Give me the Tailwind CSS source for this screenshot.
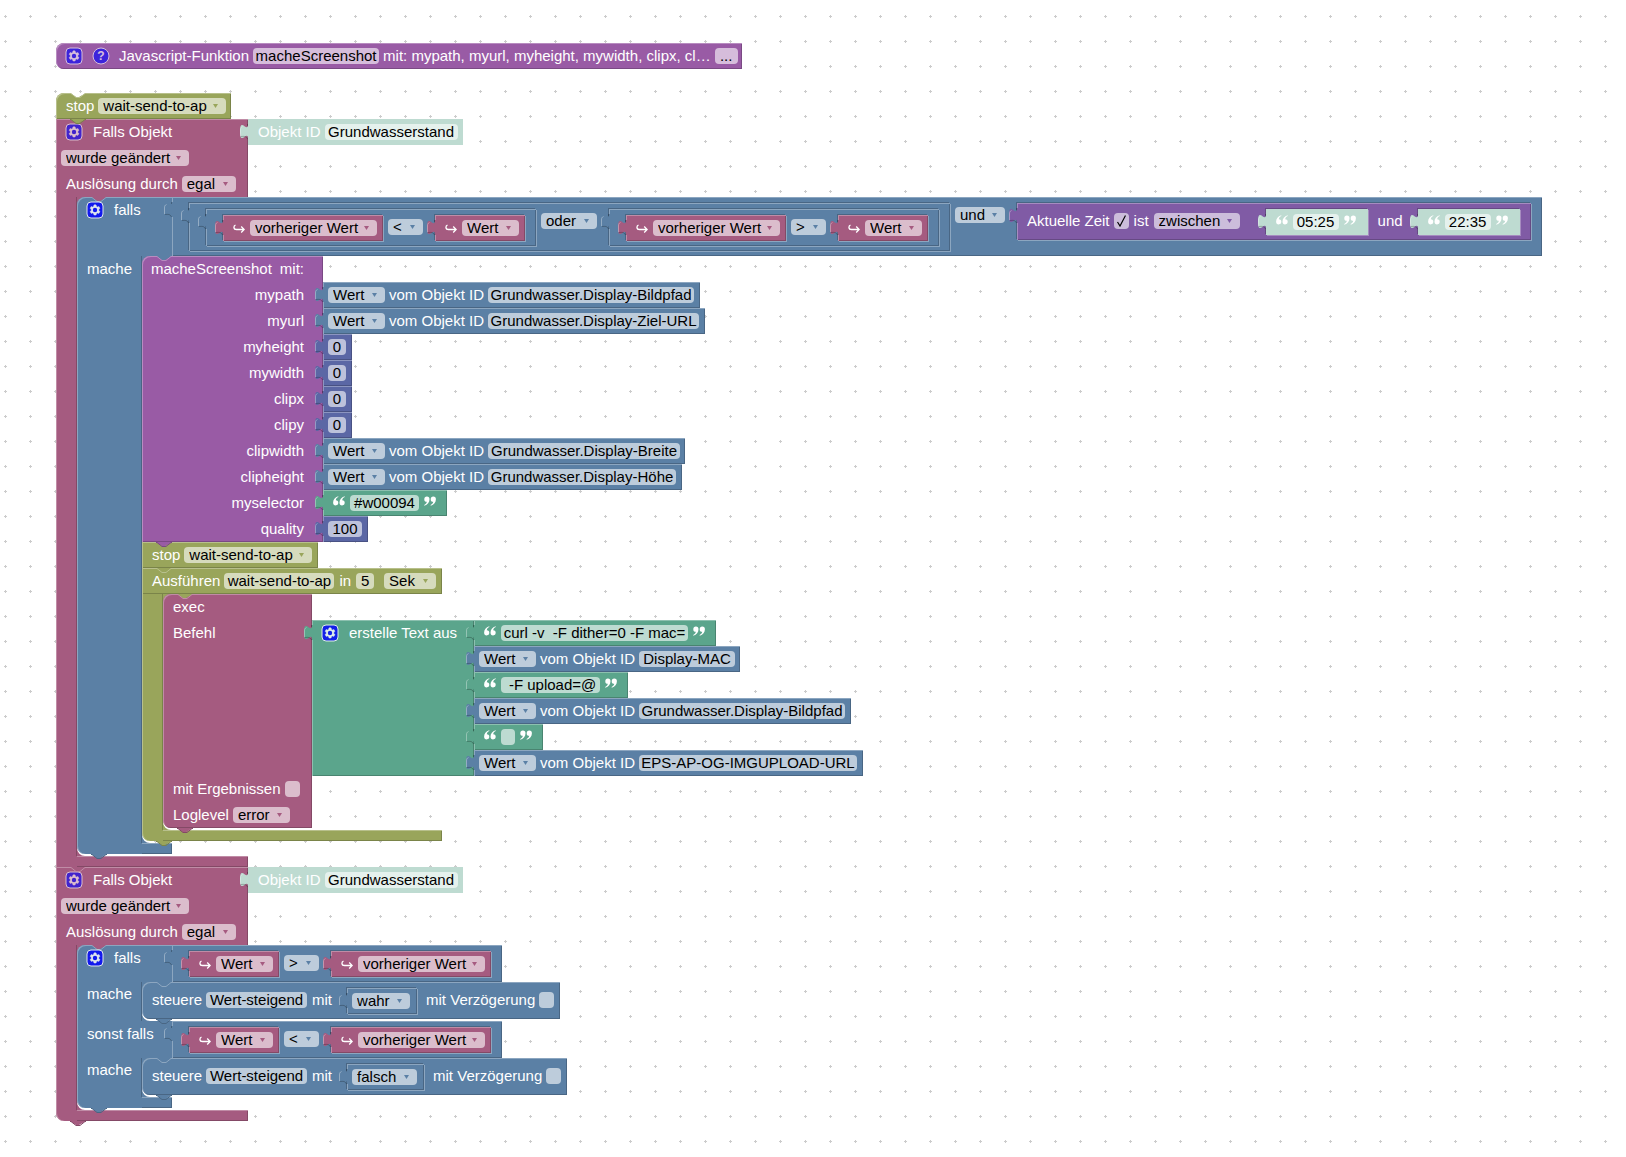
<!DOCTYPE html>
<html lang="de">
<head>
<meta charset="utf-8">
<title>Blockly – Grundwasserstand</title>
<script src="https://cdn.jsdelivr.net/npm/@tailwindcss/browser@4"></script>
</head>
<body class="bg-white">

<!-- Shared shapes -->
<svg class="hidden" aria-hidden="true">
  <symbol id="notch" viewBox="0 0 16 5" overflow="visible"><path stroke="none" d="M0 0l6 4h3l7-4z"/><path fill="none" d="M0 .5h1l5 4h4l5-4h1"/></symbol>
  <symbol id="tab" viewBox="0 0 9 16" overflow="visible">
    <path d="M9 0H8C8 10 0-8 0 7.500S8 5 8 15h1z"/>
    <path d="M.5 12V6c0-2 .6-3 2-3.500" fill="none" stroke="#fff" stroke-opacity=".35"/>
    <path d="M7.500 0v2M1 12.500c2 0 5-1 6.500 2.500" fill="none" stroke="#000" stroke-opacity=".25"/>
  </symbol>
  <symbol id="gear" viewBox="0 0 16 16" overflow="visible">
    <rect width="16" height="16" rx="4" fill="#00f" stroke="#fff"/>
    <path fill="#fff" stroke="#fff" stroke-width=".4" d="m4.203,7.296 0,1.368 -0.92,0.677 -0.11,0.41 0.9,1.59 0.41,0.11 1.05,-0.45 1.18,0.68 0.13,1.13 0.3,0.3 1.81,0 0.3,-0.3 0.13,-1.13 1.18,-0.68 1.05,0.45 0.41,-0.11 0.9,-1.59 -0.11,-0.41 -0.92,-0.677 0,-1.368 0.92,-0.677 0.11,-0.41 -0.9,-1.59 -0.41,-0.11 -1.05,0.45 -1.18,-0.68 -0.13,-1.13 -0.3,-0.3 -1.81,0 -0.3,0.3 -0.13,1.13 -1.18,0.68 -1.05,-0.45 -0.41,0.11 -0.9,1.59 0.11,0.41z"/>
    <circle cx="8" cy="8" r="2.200" fill="#00f"/>
  </symbol>
  <symbol id="tri" viewBox="0 0 5 4"><path d="M0 0h5L2.500 4z"/></symbol>
  <symbol id="hook" viewBox="0 0 12 11"><path fill="none" stroke="#fff" stroke-width="1.300" d="M2.500 2.200C.4 2.800.2 6.500 3.500 6.500H11M8.200 3.500l3 3-3 3"/></symbol>
  <symbol id="quote" viewBox="0 0 12 10"><path fill="#fff" d="M5.200.2C2 1.200.1 3.600.1 6.800a2.600 2.600 0 1 0 2.700-2.600C2.900 2.800 3.800 1.700 5.400 1zM11.600.2C8.400 1.200 6.500 3.600 6.500 6.800a2.600 2.600 0 1 0 2.700-2.600C9.300 2.800 10.200 1.700 11.800 1z"/></symbol>
</svg>

<main class="relative min-h-screen overflow-hidden pt-[43px] pb-8 pl-14 text-[15px] leading-4 whitespace-nowrap text-white [font-family:'Liberation_Sans',Arial,sans-serif]">
  <svg class="absolute inset-0 h-full w-full" aria-hidden="true">
    <defs><pattern id="grid" width="25" height="25" patternUnits="userSpaceOnUse"><path d="M4 16.500h3M5.500 15v3" stroke="#ccc"/></pattern></defs>
    <rect width="100%" height="100%" fill="url(#grid)"/>
  </svg>

  <!-- Function definition (collapsed) -->
  <section class="relative flex h-[26px] w-max items-center rounded-l-lg bg-[#995ba5] pr-1 pl-2.5 shadow-[inset_1px_1px_0_#b88cc0,inset_-1px_-1px_0_#7a4984]">
    <button class="size-4 opacity-60" aria-label="Einstellungen"><svg class="size-4 overflow-visible"><use href="#gear"/></svg></button>
    <button class="ml-[11px] size-4 opacity-60" aria-label="Hilfe"><svg class="size-4 overflow-visible" viewBox="0 0 16 16"><circle cx="8" cy="8" r="8" fill="#00f" stroke="#fff"/><text x="8" y="12" text-anchor="middle" font-size="12" font-weight="bold" fill="#fff">?</text></svg></button>
    <span class="ml-2.5">Javascript-Funktion</span>
    <input aria-label="Funktionsname" class="ml-1 h-4 w-[126px] rounded bg-white/60 text-center text-black" value="macheScreenshot">
    <span class="ml-1">mit: mypath, myurl, myheight, mywidth, clipx, cl…</span>
    <button class="ml-1 h-4 w-[23px] rounded bg-white/60 text-black">...</button>
  </section>

  <div class="relative mt-6 w-max">
    <!-- stop -->
    <section class="relative flex h-[26px] w-[175px] items-center rounded-tl-lg bg-[#99a55b] pl-2.5 shadow-[inset_1px_1px_0_#b8c08c,inset_-1px_-1px_0_#7a8449]">
      <svg class="absolute top-0 left-3.5 h-[5px] w-4 fill-white stroke-[#b8c08c]"><use href="#notch"/></svg>
      <span>stop</span>
      <span class="relative ml-1 flex"><select aria-label="Timer" class="h-4 w-32 appearance-none rounded bg-white/60 pl-[5px] text-black"><option>wait-send-to-ap</option></select><svg class="pointer-events-none absolute top-1.5 right-2 h-1 w-[5px] fill-[#99a55b]"><use href="#tri"/></svg></span>
      <svg class="absolute top-full left-3.5 z-10 h-[5px] w-4 fill-[#99a55b] stroke-[#7a8449]"><use href="#notch"/></svg>
    </section>

    <!-- Trigger 1 -->
    <section>
      <div class="flex">
        <div class="h-[78px] w-48 bg-[#a55b80] shadow-[inset_1px_1px_0_#c08ca6,inset_-1px_0_0_#844966]">
          <div class="flex h-[26px] items-center pl-2.5">
            <button class="size-4 opacity-60" aria-label="Einstellungen"><svg class="size-4 overflow-visible"><use href="#gear"/></svg></button>
            <span class="ml-[11px]">Falls Objekt</span>
          </div>
          <div class="flex h-[26px] items-center pl-[5px]">
            <span class="relative flex"><select aria-label="Bedingung" class="h-4 w-32 appearance-none rounded bg-white/60 pl-[5px] text-black"><option>wurde geändert</option></select><svg class="pointer-events-none absolute top-1.5 right-2 h-1 w-[5px] fill-[#a55b80]"><use href="#tri"/></svg></span>
          </div>
          <div class="flex h-[26px] items-center pl-2.5">
            <span>Auslösung durch</span>
            <span class="relative ml-1 flex"><select aria-label="Auslösung durch" class="h-4 w-[54px] appearance-none rounded bg-white/60 pl-[5px] text-black"><option>egal</option></select><svg class="pointer-events-none absolute top-1.5 right-2 h-1 w-[5px] fill-[#a55b80]"><use href="#tri"/></svg></span>
          </div>
        </div>
        <div class="relative flex h-[26px] items-center bg-[#bedbd1] pr-[5px] pl-2.5">
          <svg class="absolute top-[5px] -left-2 h-4 w-[9px] fill-[#bedbd1]"><use href="#tab"/></svg>
          <span>Objekt ID</span>
          <input aria-label="Objekt ID" class="ml-1 h-4 w-[133px] rounded bg-white/60 text-center text-black" value="Grundwasserstand">
        </div>
      </div>

      <div class="flex">
        <div class="relative w-[21px] bg-[#a55b80] shadow-[inset_1px_0_0_#c08ca6]"><div class="absolute top-0 right-0 bottom-[11px] w-px bg-[#844966]"></div></div>
        <div class="relative">
          <div class="absolute top-0 left-0 size-2 bg-[#a55b80]"></div>

          <!-- falls / mache -->
          <section class="relative">
            <div class="flex">
              <div class="relative flex w-[95px] items-start rounded-tl-lg bg-[#5b80a5] pt-[5px] pl-2.5 shadow-[inset_1px_1px_0_#8ca6c0]">
                <svg class="absolute top-0 left-3.5 h-[5px] w-4 fill-[#a55b80] stroke-[#8ca6c0]"><use href="#notch"/></svg>
                <button class="size-4 opacity-80" aria-label="Einstellungen"><svg class="size-4 overflow-visible"><use href="#gear"/></svg></button>
                <span class="ml-[11px]">falls</span>
              </div>
              <!-- und -->
              <div class="relative flex items-start bg-[#5b80a5] pt-1.5 pr-[11px] pb-[5px] pl-[17px] shadow-[inset_1px_1px_0_#8ca6c0,inset_-1px_-1px_0_#496684]">
                <svg class="absolute top-[5px] -left-2 h-4 w-[9px] fill-[#5b80a5]"><use href="#tab"/></svg>
                <!-- oder -->
                <div class="relative flex items-start bg-[#5b80a5] pt-1.5 pr-[11px] pb-[5px] pl-[17px] shadow-[inset_1px_1px_0_#8ca6c0,inset_-1px_-1px_0_#496684,1px_1px_0_#8ca6c0,-1px_-1px_0_#496684]">
                  <svg class="absolute top-[5px] -left-2 h-4 w-[9px] fill-[#5b80a5]"><use href="#tab"/></svg>
                  <div class="relative flex items-start bg-[#5b80a5] pt-1.5 pr-[11px] pb-[5px] pl-[17px] shadow-[inset_1px_1px_0_#8ca6c0,inset_-1px_-1px_0_#496684,1px_1px_0_#8ca6c0,-1px_-1px_0_#496684]">
                    <svg class="absolute top-[5px] -left-2 h-4 w-[9px] fill-[#5b80a5]"><use href="#tab"/></svg>
                    <div class="relative flex h-[26px] items-center bg-[#a55b80] pr-1.5 pl-2.5 shadow-[inset_1px_1px_0_#c08ca6,inset_-1px_-1px_0_#844966,1px_1px_0_#8ca6c0,-1px_-1px_0_#496684]">
                      <svg class="absolute top-[5px] -left-2 h-4 w-[9px] fill-[#a55b80]"><use href="#tab"/></svg>
                      <svg class="h-[11px] w-3"><use href="#hook"/></svg>
                      <span class="relative ml-[5px] flex"><select aria-label="Attribut" class="h-4 w-[127px] appearance-none rounded bg-white/60 pl-[5px] text-black"><option>vorheriger Wert</option></select><svg class="pointer-events-none absolute top-1.5 right-2 h-1 w-[5px] fill-[#a55b80]"><use href="#tri"/></svg></span>
                    </div>
                    <span class="relative mt-1 ml-[5px] flex"><select aria-label="Vergleich" class="h-4 w-[35px] appearance-none rounded bg-white/60 pl-[5px] text-black"><option>&lt;</option></select><svg class="pointer-events-none absolute top-1.5 right-2 h-1 w-[5px] fill-[#5b80a5]"><use href="#tri"/></svg></span>
                    <div class="relative ml-3 flex h-[26px] items-center bg-[#a55b80] pr-1.5 pl-2.5 shadow-[inset_1px_1px_0_#c08ca6,inset_-1px_-1px_0_#844966,1px_1px_0_#8ca6c0,-1px_-1px_0_#496684]">
                      <svg class="absolute top-[5px] -left-2 h-4 w-[9px] fill-[#a55b80]"><use href="#tab"/></svg>
                      <svg class="h-[11px] w-3"><use href="#hook"/></svg>
                      <span class="relative ml-[5px] flex"><select aria-label="Attribut" class="h-4 w-[57px] appearance-none rounded bg-white/60 pl-[5px] text-black"><option>Wert</option></select><svg class="pointer-events-none absolute top-1.5 right-2 h-1 w-[5px] fill-[#a55b80]"><use href="#tri"/></svg></span>
                    </div>
                  </div>
                  <span class="relative mt-1 ml-[5px] flex"><select aria-label="Verknüpfung" class="h-4 w-14 appearance-none rounded bg-white/60 pl-[5px] text-black"><option>oder</option></select><svg class="pointer-events-none absolute top-1.5 right-2 h-1 w-[5px] fill-[#5b80a5]"><use href="#tri"/></svg></span>
                  <div class="relative ml-3 flex items-start bg-[#5b80a5] pt-1.5 pr-[11px] pb-[5px] pl-[17px] shadow-[inset_1px_1px_0_#8ca6c0,inset_-1px_-1px_0_#496684,1px_1px_0_#8ca6c0,-1px_-1px_0_#496684]">
                    <svg class="absolute top-[5px] -left-2 h-4 w-[9px] fill-[#5b80a5]"><use href="#tab"/></svg>
                    <div class="relative flex h-[26px] items-center bg-[#a55b80] pr-1.5 pl-2.5 shadow-[inset_1px_1px_0_#c08ca6,inset_-1px_-1px_0_#844966,1px_1px_0_#8ca6c0,-1px_-1px_0_#496684]">
                      <svg class="absolute top-[5px] -left-2 h-4 w-[9px] fill-[#a55b80]"><use href="#tab"/></svg>
                      <svg class="h-[11px] w-3"><use href="#hook"/></svg>
                      <span class="relative ml-[5px] flex"><select aria-label="Attribut" class="h-4 w-[127px] appearance-none rounded bg-white/60 pl-[5px] text-black"><option>vorheriger Wert</option></select><svg class="pointer-events-none absolute top-1.5 right-2 h-1 w-[5px] fill-[#a55b80]"><use href="#tri"/></svg></span>
                    </div>
                    <span class="relative mt-1 ml-[5px] flex"><select aria-label="Vergleich" class="h-4 w-[35px] appearance-none rounded bg-white/60 pl-[5px] text-black"><option>&gt;</option></select><svg class="pointer-events-none absolute top-1.5 right-2 h-1 w-[5px] fill-[#5b80a5]"><use href="#tri"/></svg></span>
                    <div class="relative ml-3 flex h-[26px] items-center bg-[#a55b80] pr-1.5 pl-2.5 shadow-[inset_1px_1px_0_#c08ca6,inset_-1px_-1px_0_#844966,1px_1px_0_#8ca6c0,-1px_-1px_0_#496684]">
                      <svg class="absolute top-[5px] -left-2 h-4 w-[9px] fill-[#a55b80]"><use href="#tab"/></svg>
                      <svg class="h-[11px] w-3"><use href="#hook"/></svg>
                      <span class="relative ml-[5px] flex"><select aria-label="Attribut" class="h-4 w-[57px] appearance-none rounded bg-white/60 pl-[5px] text-black"><option>Wert</option></select><svg class="pointer-events-none absolute top-1.5 right-2 h-1 w-[5px] fill-[#a55b80]"><use href="#tri"/></svg></span>
                    </div>
                  </div>
                </div>
                <span class="relative mt-1 ml-[5px] flex"><select aria-label="Verknüpfung" class="h-4 w-[50px] appearance-none rounded bg-white/60 pl-[5px] text-black"><option>und</option></select><svg class="pointer-events-none absolute top-1.5 right-2 h-1 w-[5px] fill-[#5b80a5]"><use href="#tri"/></svg></span>
                <!-- Zeitvergleich -->
                <div class="relative ml-3 flex items-start bg-[#805ba5] pt-1.5 pr-[11px] pb-[5px] pl-2.5 shadow-[inset_1px_1px_0_#a68cc0,inset_-1px_-1px_0_#664984,1px_1px_0_#8ca6c0,-1px_-1px_0_#496684]">
                  <svg class="absolute top-[5px] -left-2 h-4 w-[9px] fill-[#805ba5]"><use href="#tab"/></svg>
                  <label class="mt-1 flex gap-1">Aktuelle Zeit
                    <span class="relative flex"><input type="checkbox" checked class="h-4 w-[15px] appearance-none rounded bg-white/60"><svg class="pointer-events-none absolute top-0.5 left-[3px] h-3 w-[9px]" viewBox="0 0 9 12"><path d="M.5 7L3 11 8.500.5" fill="none" stroke="#000" stroke-width="1.200"/></svg></span>
                  </label>
                  <span class="mt-1 ml-[5px]">ist</span>
                  <span class="relative mt-1 ml-[5px] flex"><select aria-label="Zeitraum" class="h-4 w-[86px] appearance-none rounded bg-white/60 pl-[5px] text-black"><option>zwischen</option></select><svg class="pointer-events-none absolute top-1.5 right-2 h-1 w-[5px] fill-[#805ba5]"><use href="#tri"/></svg></span>
                  <div class="relative ml-[26px] flex h-[26px] items-center bg-[#bedbd1] pr-3 pl-2.5 shadow-[1px_1px_0_#a68cc0,-1px_-1px_0_#664984]">
                    <svg class="absolute top-[5px] -left-2 h-4 w-[9px] fill-[#bedbd1]"><use href="#tab"/></svg>
                    <svg class="mb-1 h-2.5 w-3"><use href="#quote"/></svg>
                    <input aria-label="Von" class="mx-[5px] h-4 w-[46px] rounded bg-white/60 text-center text-black" value="05:25">
                    <svg class="mb-1 h-2.5 w-3 rotate-180"><use href="#quote"/></svg>
                  </div>
                  <span class="mt-1 ml-2.5">und</span>
                  <div class="relative ml-[15px] flex h-[26px] items-center bg-[#bedbd1] pr-3 pl-2.5 shadow-[1px_1px_0_#a68cc0,-1px_-1px_0_#664984]">
                    <svg class="absolute top-[5px] -left-2 h-4 w-[9px] fill-[#bedbd1]"><use href="#tab"/></svg>
                    <svg class="mb-1 h-2.5 w-3"><use href="#quote"/></svg>
                    <input aria-label="Bis" class="mx-[5px] h-4 w-[46px] rounded bg-white/60 text-center text-black" value="22:35">
                    <svg class="mb-1 h-2.5 w-3 rotate-180"><use href="#quote"/></svg>
                  </div>
                </div>
              </div>
            </div>

            <div class="flex">
              <div class="relative w-[65px] rounded-bl-lg bg-[#5b80a5] pt-[5px] pl-2.5 shadow-[inset_1px_0_0_#8ca6c0]">mache
                <div class="absolute top-0 right-0 bottom-[11px] w-px bg-[#496684]"></div>
                <svg class="absolute top-full left-3.5 z-10 h-[5px] w-4 fill-[#5b80a5] stroke-[#496684]"><use href="#notch"/></svg>
              </div>
              <div class="relative">
                <div class="absolute top-0 left-0 size-2 bg-[#5b80a5]"></div>

                <!-- macheScreenshot call -->
                <section class="relative flex">
                  <div class="relative w-[181px] rounded-tl-lg bg-[#995ba5] pr-[19px] text-right leading-[26px] shadow-[inset_1px_1px_0_#b88cc0,inset_-1px_-1px_0_#7a4984]">
                    <svg class="absolute top-0 left-3.5 h-[5px] w-4 fill-[#5b80a5] stroke-[#b88cc0]"><use href="#notch"/></svg>
                    <div class="flex justify-end gap-2"><span>macheScreenshot</span><span>mit:</span></div>
                    <div>mypath</div>
                    <div>myurl</div>
                    <div>myheight</div>
                    <div>mywidth</div>
                    <div>clipx</div>
                    <div>clipy</div>
                    <div>clipwidth</div>
                    <div>clipheight</div>
                    <div>myselector</div>
                    <div>quality</div>
                    <svg class="absolute top-full left-3.5 z-10 h-[5px] w-4 fill-[#995ba5] stroke-[#7a4984]"><use href="#notch"/></svg>
                  </div>
                  <div class="flex flex-col items-start pt-[26px]">
                    <div class="relative flex h-[26px] items-center bg-[#5b80a5] pr-1.5 pl-[5px] shadow-[inset_1px_1px_0_#8ca6c0,inset_-1px_-1px_0_#496684]">
                      <svg class="absolute top-[5px] -left-2 h-4 w-[9px] fill-[#5b80a5]"><use href="#tab"/></svg>
                      <span class="relative flex"><select aria-label="Attribut" class="h-4 w-[57px] appearance-none rounded bg-white/60 pl-[5px] text-black"><option>Wert</option></select><svg class="pointer-events-none absolute top-1.5 right-2 h-1 w-[5px] fill-[#5b80a5]"><use href="#tri"/></svg></span>
                      <span class="ml-1">vom Objekt ID</span>
                      <input aria-label="Objekt ID" class="ml-1 h-4 w-[206px] rounded bg-white/60 text-center text-black" value="Grundwasser.Display-Bildpfad">
                    </div>
                    <div class="relative flex h-[26px] items-center bg-[#5b80a5] pr-1.5 pl-[5px] shadow-[inset_1px_1px_0_#8ca6c0,inset_-1px_-1px_0_#496684]">
                      <svg class="absolute top-[5px] -left-2 h-4 w-[9px] fill-[#5b80a5]"><use href="#tab"/></svg>
                      <span class="relative flex"><select aria-label="Attribut" class="h-4 w-[57px] appearance-none rounded bg-white/60 pl-[5px] text-black"><option>Wert</option></select><svg class="pointer-events-none absolute top-1.5 right-2 h-1 w-[5px] fill-[#5b80a5]"><use href="#tri"/></svg></span>
                      <span class="ml-1">vom Objekt ID</span>
                      <input aria-label="Objekt ID" class="ml-1 h-4 w-[211px] rounded bg-white/60 text-center text-black" value="Grundwasser.Display-Ziel-URL">
                    </div>
                    <div class="relative flex h-[26px] items-center bg-[#5b67a5] pr-1.5 pl-[5px] shadow-[inset_1px_1px_0_#8c95c0,inset_-1px_-1px_0_#495284]">
                      <svg class="absolute top-[5px] -left-2 h-4 w-[9px] fill-[#5b67a5]"><use href="#tab"/></svg>
                      <input aria-label="myheight" class="h-4 w-[18px] rounded bg-white/60 text-center text-black" value="0">
                    </div>
                    <div class="relative flex h-[26px] items-center bg-[#5b67a5] pr-1.5 pl-[5px] shadow-[inset_1px_1px_0_#8c95c0,inset_-1px_-1px_0_#495284]">
                      <svg class="absolute top-[5px] -left-2 h-4 w-[9px] fill-[#5b67a5]"><use href="#tab"/></svg>
                      <input aria-label="mywidth" class="h-4 w-[18px] rounded bg-white/60 text-center text-black" value="0">
                    </div>
                    <div class="relative flex h-[26px] items-center bg-[#5b67a5] pr-1.5 pl-[5px] shadow-[inset_1px_1px_0_#8c95c0,inset_-1px_-1px_0_#495284]">
                      <svg class="absolute top-[5px] -left-2 h-4 w-[9px] fill-[#5b67a5]"><use href="#tab"/></svg>
                      <input aria-label="clipx" class="h-4 w-[18px] rounded bg-white/60 text-center text-black" value="0">
                    </div>
                    <div class="relative flex h-[26px] items-center bg-[#5b67a5] pr-1.5 pl-[5px] shadow-[inset_1px_1px_0_#8c95c0,inset_-1px_-1px_0_#495284]">
                      <svg class="absolute top-[5px] -left-2 h-4 w-[9px] fill-[#5b67a5]"><use href="#tab"/></svg>
                      <input aria-label="clipy" class="h-4 w-[18px] rounded bg-white/60 text-center text-black" value="0">
                    </div>
                    <div class="relative flex h-[26px] items-center bg-[#5b80a5] pr-[5px] pl-[5px] shadow-[inset_1px_1px_0_#8ca6c0,inset_-1px_-1px_0_#496684]">
                      <svg class="absolute top-[5px] -left-2 h-4 w-[9px] fill-[#5b80a5]"><use href="#tab"/></svg>
                      <span class="relative flex"><select aria-label="Attribut" class="h-4 w-[57px] appearance-none rounded bg-white/60 pl-[5px] text-black"><option>Wert</option></select><svg class="pointer-events-none absolute top-1.5 right-2 h-1 w-[5px] fill-[#5b80a5]"><use href="#tri"/></svg></span>
                      <span class="ml-1">vom Objekt ID</span>
                      <input aria-label="Objekt ID" class="ml-1 h-4 w-48 rounded bg-white/60 text-center text-black" value="Grundwasser.Display-Breite">
                    </div>
                    <div class="relative flex h-[26px] items-center bg-[#5b80a5] pr-1.5 pl-[5px] shadow-[inset_1px_1px_0_#8ca6c0,inset_-1px_-1px_0_#496684]">
                      <svg class="absolute top-[5px] -left-2 h-4 w-[9px] fill-[#5b80a5]"><use href="#tab"/></svg>
                      <span class="relative flex"><select aria-label="Attribut" class="h-4 w-[57px] appearance-none rounded bg-white/60 pl-[5px] text-black"><option>Wert</option></select><svg class="pointer-events-none absolute top-1.5 right-2 h-1 w-[5px] fill-[#5b80a5]"><use href="#tri"/></svg></span>
                      <span class="ml-1">vom Objekt ID</span>
                      <input aria-label="Objekt ID" class="ml-1 h-4 w-[188px] rounded bg-white/60 text-center text-black" value="Grundwasser.Display-Höhe">
                    </div>
                    <div class="relative flex h-[26px] items-center bg-[#5ba58c] pr-[11px] pl-2.5 shadow-[inset_1px_1px_0_#8cc0af,inset_-1px_-1px_0_#498470]">
                      <svg class="absolute top-[5px] -left-2 h-4 w-[9px] fill-[#5ba58c]"><use href="#tab"/></svg>
                      <svg class="mb-1 h-2.5 w-3"><use href="#quote"/></svg>
                      <input aria-label="myselector" class="mx-[5px] h-4 w-[69px] rounded bg-white/60 text-center text-black" value="#w00094">
                      <svg class="mb-1 h-2.5 w-3 rotate-180"><use href="#quote"/></svg>
                    </div>
                    <div class="relative flex h-[26px] items-center bg-[#5b67a5] pr-1.5 pl-[5px] shadow-[inset_1px_1px_0_#8c95c0,inset_-1px_-1px_0_#495284]">
                      <svg class="absolute top-[5px] -left-2 h-4 w-[9px] fill-[#5b67a5]"><use href="#tab"/></svg>
                      <input aria-label="quality" class="h-4 w-[34px] rounded bg-white/60 text-center text-black" value="100">
                    </div>
                  </div>
                </section>

                <!-- stop -->
                <section class="relative flex h-[26px] w-44 items-center bg-[#99a55b] pl-2.5 shadow-[inset_1px_1px_0_#b8c08c,inset_-1px_-1px_0_#7a8449]">
                  <span>stop</span>
                  <span class="relative ml-1 flex"><select aria-label="Timer" class="h-4 w-32 appearance-none rounded bg-white/60 pl-[5px] text-black"><option>wait-send-to-ap</option></select><svg class="pointer-events-none absolute top-1.5 right-2 h-1 w-[5px] fill-[#99a55b]"><use href="#tri"/></svg></span>
                  <svg class="absolute top-full left-3.5 z-10 h-[5px] w-4 fill-[#99a55b] stroke-[#b8c08c]"><use href="#notch"/></svg>
                </section>

                <!-- Ausführen -->
                <section>
                  <div class="flex h-[26px] w-[300px] items-center bg-[#99a55b] pl-2.5 shadow-[inset_1px_1px_0_#b8c08c,inset_-1px_-1px_0_#7a8449]">
                    <span>Ausführen</span>
                    <input aria-label="Timer-Name" class="ml-1 h-4 w-[110px] rounded bg-white/60 text-center text-black" value="wait-send-to-ap">
                    <span class="ml-[5px]">in</span>
                    <input aria-label="Dauer" class="ml-[5px] h-4 w-[18px] rounded bg-white/60 text-center text-black" value="5">
                    <span class="relative ml-2.5 flex"><select aria-label="Einheit" class="h-4 w-[52px] appearance-none rounded bg-white/60 pl-[5px] text-black"><option>Sek</option></select><svg class="pointer-events-none absolute top-1.5 right-2 h-1 w-[5px] fill-[#99a55b]"><use href="#tri"/></svg></span>
                  </div>
                  <div class="flex">
                    <div class="relative w-[21px] rounded-bl-lg bg-[#99a55b] shadow-[inset_1px_0_0_#b8c08c]">
                      <div class="absolute top-0 right-0 bottom-[11px] w-px bg-[#7a8449]"></div>
                      <svg class="absolute top-full left-3.5 z-10 h-[5px] w-4 fill-[#99a55b] stroke-[#7a8449]"><use href="#notch"/></svg>
                    </div>
                    <div class="relative">
                      <div class="absolute top-0 left-0 size-2 bg-[#99a55b]"></div>

                      <!-- exec -->
                      <section class="relative flex">
                        <div class="relative w-[149px] rounded-l-lg bg-[#a55b80] pl-2.5 shadow-[inset_1px_1px_0_#c08ca6,inset_-1px_-1px_0_#844966]">
                          <svg class="absolute top-0 left-3.5 h-[5px] w-4 fill-[#99a55b] stroke-[#c08ca6]"><use href="#notch"/></svg>
                          <div class="h-[26px] leading-[26px]">exec</div>
                          <div class="h-[156px] leading-[26px]">Befehl</div>
                          <label class="flex h-[26px] items-center gap-1">mit Ergebnissen <input type="checkbox" class="h-4 w-[15px] appearance-none rounded bg-white/60"></label>
                          <div class="flex h-[26px] items-center">
                            <span>Loglevel</span>
                            <span class="relative ml-1 flex"><select aria-label="Loglevel" class="h-4 w-[57px] appearance-none rounded bg-white/60 pl-[5px] text-black"><option>error</option></select><svg class="pointer-events-none absolute top-1.5 right-2 h-1 w-[5px] fill-[#a55b80]"><use href="#tri"/></svg></span>
                          </div>
                          <svg class="absolute top-full left-3.5 z-10 h-[5px] w-4 fill-[#a55b80] stroke-[#844966]"><use href="#notch"/></svg>
                        </div>
                        <div class="flex h-[182px] pt-[26px]">
                          <!-- erstelle Text aus -->
                          <div class="relative flex w-[162px] items-start bg-[#5ba58c] pt-[5px] pl-2.5 shadow-[inset_1px_1px_0_#8cc0af,inset_-1px_-1px_0_#498470]">
                            <svg class="absolute top-[5px] -left-2 h-4 w-[9px] fill-[#5ba58c]"><use href="#tab"/></svg>
                            <button class="size-4 opacity-80" aria-label="Einstellungen"><svg class="size-4 overflow-visible"><use href="#gear"/></svg></button>
                            <span class="ml-[11px]">erstelle Text aus</span>
                          </div>
                          <div class="flex flex-col items-start">
                            <div class="relative flex h-[26px] items-center bg-[#5ba58c] pr-[11px] pl-2.5 shadow-[inset_1px_1px_0_#8cc0af,inset_-1px_-1px_0_#498470]">
                              <svg class="absolute top-[5px] -left-2 h-4 w-[9px] fill-[#5ba58c]"><use href="#tab"/></svg>
                              <svg class="mb-1 h-2.5 w-3"><use href="#quote"/></svg>
                              <input aria-label="Text" class="mx-[5px] h-4 w-[187px] rounded bg-white/60 text-center text-black" value="curl -v  -F dither=0 -F mac=">
                              <svg class="mb-1 h-2.5 w-3 rotate-180"><use href="#quote"/></svg>
                            </div>
                            <div class="relative flex h-[26px] items-center bg-[#5b80a5] pr-[5px] pl-[5px] shadow-[inset_1px_1px_0_#8ca6c0,inset_-1px_-1px_0_#496684]">
                              <svg class="absolute top-[5px] -left-2 h-4 w-[9px] fill-[#5b80a5]"><use href="#tab"/></svg>
                              <span class="relative flex"><select aria-label="Attribut" class="h-4 w-[57px] appearance-none rounded bg-white/60 pl-[5px] text-black"><option>Wert</option></select><svg class="pointer-events-none absolute top-1.5 right-2 h-1 w-[5px] fill-[#5b80a5]"><use href="#tri"/></svg></span>
                              <span class="ml-1">vom Objekt ID</span>
                              <input aria-label="Objekt ID" class="ml-1 h-4 w-24 rounded bg-white/60 text-center text-black" value="Display-MAC">
                            </div>
                            <div class="relative flex h-[26px] items-center bg-[#5ba58c] pr-[11px] pl-2.5 shadow-[inset_1px_1px_0_#8cc0af,inset_-1px_-1px_0_#498470]">
                              <svg class="absolute top-[5px] -left-2 h-4 w-[9px] fill-[#5ba58c]"><use href="#tab"/></svg>
                              <svg class="mb-1 h-2.5 w-3"><use href="#quote"/></svg>
                              <input aria-label="Text" class="mx-[5px] h-4 w-[99px] rounded bg-white/60 text-center text-black" value=" -F upload=@">
                              <svg class="mb-1 h-2.5 w-3 rotate-180"><use href="#quote"/></svg>
                            </div>
                            <div class="relative flex h-[26px] items-center bg-[#5b80a5] pr-1.5 pl-[5px] shadow-[inset_1px_1px_0_#8ca6c0,inset_-1px_-1px_0_#496684]">
                              <svg class="absolute top-[5px] -left-2 h-4 w-[9px] fill-[#5b80a5]"><use href="#tab"/></svg>
                              <span class="relative flex"><select aria-label="Attribut" class="h-4 w-[57px] appearance-none rounded bg-white/60 pl-[5px] text-black"><option>Wert</option></select><svg class="pointer-events-none absolute top-1.5 right-2 h-1 w-[5px] fill-[#5b80a5]"><use href="#tri"/></svg></span>
                              <span class="ml-1">vom Objekt ID</span>
                              <input aria-label="Objekt ID" class="ml-1 h-4 w-[206px] rounded bg-white/60 text-center text-black" value="Grundwasser.Display-Bildpfad">
                            </div>
                            <div class="relative flex h-[26px] items-center bg-[#5ba58c] pr-[11px] pl-2.5 shadow-[inset_1px_1px_0_#8cc0af,inset_-1px_-1px_0_#498470]">
                              <svg class="absolute top-[5px] -left-2 h-4 w-[9px] fill-[#5ba58c]"><use href="#tab"/></svg>
                              <svg class="mb-1 h-2.5 w-3"><use href="#quote"/></svg>
                              <input aria-label="Text" class="mx-[5px] h-4 w-3.5 rounded bg-white/60 text-center text-black" value=" ">
                              <svg class="mb-1 h-2.5 w-3 rotate-180"><use href="#quote"/></svg>
                            </div>
                            <div class="relative flex h-[26px] items-center bg-[#5b80a5] pr-1.5 pl-[5px] shadow-[inset_1px_1px_0_#8ca6c0,inset_-1px_-1px_0_#496684]">
                              <svg class="absolute top-[5px] -left-2 h-4 w-[9px] fill-[#5b80a5]"><use href="#tab"/></svg>
                              <span class="relative flex"><select aria-label="Attribut" class="h-4 w-[57px] appearance-none rounded bg-white/60 pl-[5px] text-black"><option>Wert</option></select><svg class="pointer-events-none absolute top-1.5 right-2 h-1 w-[5px] fill-[#5b80a5]"><use href="#tri"/></svg></span>
                              <span class="ml-1">vom Objekt ID</span>
                              <input aria-label="Objekt ID" class="ml-1 h-4 w-[218px] rounded bg-white/60 text-center text-black" value="EPS-AP-OG-IMGUPLOAD-URL">
                            </div>
                          </div>
                        </div>
                      </section>
                      <svg class="absolute bottom-[11px] left-0 size-2 fill-[#99a55b]" viewBox="0 0 8 8"><path d="M0 0a8 8 0 0 0 8 8H0z"/></svg>
                      <div class="mt-0.5 h-[11px] w-[279px] bg-[#99a55b] shadow-[inset_0_1px_0_#b8c08c,inset_-1px_-1px_0_#7a8449]"></div>
                    </div>
                  </div>
                </section>
                <svg class="absolute bottom-[11px] left-0 size-2 fill-[#5b80a5]" viewBox="0 0 8 8"><path d="M0 0a8 8 0 0 0 8 8H0z"/></svg>
                <div class="mt-0.5 h-[11px] w-[30px] bg-[#5b80a5] shadow-[inset_0_1px_0_#8ca6c0,inset_-1px_-1px_0_#496684]"></div>
              </div>
            </div>
          </section>
          <svg class="absolute bottom-[11px] left-0 size-2 fill-[#a55b80]" viewBox="0 0 8 8"><path d="M0 0a8 8 0 0 0 8 8H0z"/></svg>
          <div class="mt-0.5 h-[11px] w-[171px] bg-[#a55b80] shadow-[inset_0_1px_0_#c08ca6,inset_-1px_-1px_0_#844966]"></div>
        </div>
      </div>
    </section>

    <!-- Trigger 2 -->
    <section class="relative">
      <svg class="absolute top-0 left-3.5 z-10 h-[5px] w-4 fill-[#a55b80] stroke-[#c08ca6]"><use href="#notch"/></svg>
      <div class="flex">
        <div class="h-[78px] w-48 bg-[#a55b80] shadow-[inset_1px_1px_0_#c08ca6,inset_-1px_0_0_#844966]">
          <div class="flex h-[26px] items-center pl-2.5">
            <button class="size-4 opacity-60" aria-label="Einstellungen"><svg class="size-4 overflow-visible"><use href="#gear"/></svg></button>
            <span class="ml-[11px]">Falls Objekt</span>
          </div>
          <div class="flex h-[26px] items-center pl-[5px]">
            <span class="relative flex"><select aria-label="Bedingung" class="h-4 w-32 appearance-none rounded bg-white/60 pl-[5px] text-black"><option>wurde geändert</option></select><svg class="pointer-events-none absolute top-1.5 right-2 h-1 w-[5px] fill-[#a55b80]"><use href="#tri"/></svg></span>
          </div>
          <div class="flex h-[26px] items-center pl-2.5">
            <span>Auslösung durch</span>
            <span class="relative ml-1 flex"><select aria-label="Auslösung durch" class="h-4 w-[54px] appearance-none rounded bg-white/60 pl-[5px] text-black"><option>egal</option></select><svg class="pointer-events-none absolute top-1.5 right-2 h-1 w-[5px] fill-[#a55b80]"><use href="#tri"/></svg></span>
          </div>
        </div>
        <div class="relative flex h-[26px] items-center bg-[#bedbd1] pr-[5px] pl-2.5">
          <svg class="absolute top-[5px] -left-2 h-4 w-[9px] fill-[#bedbd1]"><use href="#tab"/></svg>
          <span>Objekt ID</span>
          <input aria-label="Objekt ID" class="ml-1 h-4 w-[133px] rounded bg-white/60 text-center text-black" value="Grundwasserstand">
        </div>
      </div>

      <div class="flex">
        <div class="relative w-[21px] rounded-bl-lg bg-[#a55b80] shadow-[inset_1px_0_0_#c08ca6]">
          <div class="absolute top-0 right-0 bottom-[11px] w-px bg-[#844966]"></div>
          <svg class="absolute top-full left-3.5 z-10 h-[5px] w-4 fill-[#a55b80] stroke-[#844966]"><use href="#notch"/></svg>
        </div>
        <div class="relative">
          <div class="absolute top-0 left-0 size-2 bg-[#a55b80]"></div>
          <section class="relative">
            <!-- falls -->
            <div class="flex">
              <div class="relative flex w-[95px] items-start rounded-tl-lg bg-[#5b80a5] pt-[5px] pl-2.5 shadow-[inset_1px_1px_0_#8ca6c0]">
                <svg class="absolute top-0 left-3.5 h-[5px] w-4 fill-[#a55b80] stroke-[#8ca6c0]"><use href="#notch"/></svg>
                <button class="size-4 opacity-80" aria-label="Einstellungen"><svg class="size-4 overflow-visible"><use href="#gear"/></svg></button>
                <span class="ml-[11px]">falls</span>
              </div>
              <div class="relative flex items-start bg-[#5b80a5] pt-1.5 pr-[11px] pb-[5px] pl-[17px] shadow-[inset_1px_1px_0_#8ca6c0,inset_-1px_-1px_0_#496684]">
                <svg class="absolute top-[5px] -left-2 h-4 w-[9px] fill-[#5b80a5]"><use href="#tab"/></svg>
                <div class="relative flex h-[26px] items-center bg-[#a55b80] pr-1.5 pl-2.5 shadow-[inset_1px_1px_0_#c08ca6,inset_-1px_-1px_0_#844966,1px_1px_0_#8ca6c0,-1px_-1px_0_#496684]">
                  <svg class="absolute top-[5px] -left-2 h-4 w-[9px] fill-[#a55b80]"><use href="#tab"/></svg>
                  <svg class="h-[11px] w-3"><use href="#hook"/></svg>
                  <span class="relative ml-[5px] flex"><select aria-label="Attribut" class="h-4 w-[57px] appearance-none rounded bg-white/60 pl-[5px] text-black"><option>Wert</option></select><svg class="pointer-events-none absolute top-1.5 right-2 h-1 w-[5px] fill-[#a55b80]"><use href="#tri"/></svg></span>
                </div>
                <span class="relative mt-1 ml-[5px] flex"><select aria-label="Vergleich" class="h-4 w-[35px] appearance-none rounded bg-white/60 pl-[5px] text-black"><option>&gt;</option></select><svg class="pointer-events-none absolute top-1.5 right-2 h-1 w-[5px] fill-[#5b80a5]"><use href="#tri"/></svg></span>
                <div class="relative ml-3 flex h-[26px] items-center bg-[#a55b80] pr-1.5 pl-2.5 shadow-[inset_1px_1px_0_#c08ca6,inset_-1px_-1px_0_#844966,1px_1px_0_#8ca6c0,-1px_-1px_0_#496684]">
                  <svg class="absolute top-[5px] -left-2 h-4 w-[9px] fill-[#a55b80]"><use href="#tab"/></svg>
                  <svg class="h-[11px] w-3"><use href="#hook"/></svg>
                  <span class="relative ml-[5px] flex"><select aria-label="Attribut" class="h-4 w-[127px] appearance-none rounded bg-white/60 pl-[5px] text-black"><option>vorheriger Wert</option></select><svg class="pointer-events-none absolute top-1.5 right-2 h-1 w-[5px] fill-[#a55b80]"><use href="#tri"/></svg></span>
                </div>
              </div>
            </div>
            <!-- mache -->
            <div class="flex">
              <div class="w-[65px] bg-[#5b80a5] pt-1 pl-2.5 shadow-[inset_1px_0_0_#8ca6c0,inset_-1px_0_0_#496684]">mache</div>
              <div class="relative pb-0.5">
                <div class="absolute top-0 left-0 size-2 bg-[#5b80a5]"></div>
                <svg class="absolute bottom-0 left-0 size-2 fill-[#5b80a5]" viewBox="0 0 8 8"><path d="M0 0a8 8 0 0 0 8 8H0z"/></svg>
                <section class="relative flex items-start rounded-l-lg bg-[#5b80a5] pt-1.5 pr-1.5 pb-[5px] pl-2.5 shadow-[inset_1px_1px_0_#8ca6c0,inset_-1px_-1px_0_#496684]">
                  <svg class="absolute top-0 left-3.5 h-[5px] w-4 fill-[#5b80a5] stroke-[#8ca6c0]"><use href="#notch"/></svg>
                  <span class="mt-1">steuere</span>
                  <input aria-label="Objekt" class="mt-1 ml-1 h-4 w-[101px] rounded bg-white/60 text-center text-black" value="Wert-steigend">
                  <span class="mt-1 ml-[5px]">mit</span>
                  <div class="relative ml-[15px] flex h-[26px] items-center bg-[#5b80a5] pr-[7px] pl-[5px] shadow-[inset_1px_1px_0_#8ca6c0,inset_-1px_-1px_0_#496684,1px_1px_0_#8ca6c0,-1px_-1px_0_#496684]">
                    <svg class="absolute top-[5px] -left-2 h-4 w-[9px] fill-[#5b80a5]"><use href="#tab"/></svg>
                    <span class="relative flex"><select aria-label="Wahrheitswert" class="h-4 w-[58px] appearance-none rounded bg-white/60 pl-[5px] text-black"><option>wahr</option></select><svg class="pointer-events-none absolute top-1.5 right-2 h-1 w-[5px] fill-[#5b80a5]"><use href="#tri"/></svg></span>
                  </div>
                  <label class="mt-1 ml-[9px] flex gap-1">mit Verzögerung <input type="checkbox" class="h-4 w-[15px] appearance-none rounded bg-white/60"></label>
                  <svg class="absolute top-full left-3.5 z-10 h-[5px] w-4 fill-[#5b80a5] stroke-[#496684]"><use href="#notch"/></svg>
                </section>
              </div>
            </div>
            <!-- sonst falls -->
            <div class="flex">
              <div class="w-[95px] bg-[#5b80a5] pt-[5px] pl-2.5 shadow-[inset_1px_0_0_#8ca6c0]">sonst falls</div>
              <div class="relative flex items-start bg-[#5b80a5] pt-1.5 pr-[11px] pb-[5px] pl-[17px] shadow-[inset_1px_1px_0_#8ca6c0,inset_-1px_-1px_0_#496684]">
                <svg class="absolute top-[5px] -left-2 h-4 w-[9px] fill-[#5b80a5]"><use href="#tab"/></svg>
                <div class="relative flex h-[26px] items-center bg-[#a55b80] pr-1.5 pl-2.5 shadow-[inset_1px_1px_0_#c08ca6,inset_-1px_-1px_0_#844966,1px_1px_0_#8ca6c0,-1px_-1px_0_#496684]">
                  <svg class="absolute top-[5px] -left-2 h-4 w-[9px] fill-[#a55b80]"><use href="#tab"/></svg>
                  <svg class="h-[11px] w-3"><use href="#hook"/></svg>
                  <span class="relative ml-[5px] flex"><select aria-label="Attribut" class="h-4 w-[57px] appearance-none rounded bg-white/60 pl-[5px] text-black"><option>Wert</option></select><svg class="pointer-events-none absolute top-1.5 right-2 h-1 w-[5px] fill-[#a55b80]"><use href="#tri"/></svg></span>
                </div>
                <span class="relative mt-1 ml-[5px] flex"><select aria-label="Vergleich" class="h-4 w-[35px] appearance-none rounded bg-white/60 pl-[5px] text-black"><option>&lt;</option></select><svg class="pointer-events-none absolute top-1.5 right-2 h-1 w-[5px] fill-[#5b80a5]"><use href="#tri"/></svg></span>
                <div class="relative ml-3 flex h-[26px] items-center bg-[#a55b80] pr-1.5 pl-2.5 shadow-[inset_1px_1px_0_#c08ca6,inset_-1px_-1px_0_#844966,1px_1px_0_#8ca6c0,-1px_-1px_0_#496684]">
                  <svg class="absolute top-[5px] -left-2 h-4 w-[9px] fill-[#a55b80]"><use href="#tab"/></svg>
                  <svg class="h-[11px] w-3"><use href="#hook"/></svg>
                  <span class="relative ml-[5px] flex"><select aria-label="Attribut" class="h-4 w-[127px] appearance-none rounded bg-white/60 pl-[5px] text-black"><option>vorheriger Wert</option></select><svg class="pointer-events-none absolute top-1.5 right-2 h-1 w-[5px] fill-[#a55b80]"><use href="#tri"/></svg></span>
                </div>
              </div>
            </div>
            <!-- mache -->
            <div class="flex">
              <div class="relative w-[65px] rounded-bl-lg bg-[#5b80a5] pt-1 pl-2.5 shadow-[inset_1px_0_0_#8ca6c0]">mache
                <div class="absolute top-0 right-0 bottom-[11px] w-px bg-[#496684]"></div>
                <svg class="absolute top-full left-3.5 z-10 h-[5px] w-4 fill-[#5b80a5] stroke-[#496684]"><use href="#notch"/></svg>
              </div>
              <div class="relative">
                <div class="absolute top-0 left-0 size-2 bg-[#5b80a5]"></div>
                <svg class="absolute bottom-[11px] left-0 size-2 fill-[#5b80a5]" viewBox="0 0 8 8"><path d="M0 0a8 8 0 0 0 8 8H0z"/></svg>
                <section class="relative flex items-start rounded-l-lg bg-[#5b80a5] pt-1.5 pr-1.5 pb-[5px] pl-2.5 shadow-[inset_1px_1px_0_#8ca6c0,inset_-1px_-1px_0_#496684]">
                  <svg class="absolute top-0 left-3.5 h-[5px] w-4 fill-[#5b80a5] stroke-[#8ca6c0]"><use href="#notch"/></svg>
                  <span class="mt-1">steuere</span>
                  <input aria-label="Objekt" class="mt-1 ml-1 h-4 w-[101px] rounded bg-white/60 text-center text-black" value="Wert-steigend">
                  <span class="mt-1 ml-[5px]">mit</span>
                  <div class="relative ml-[15px] flex h-[26px] items-center bg-[#5b80a5] pr-[7px] pl-[5px] shadow-[inset_1px_1px_0_#8ca6c0,inset_-1px_-1px_0_#496684,1px_1px_0_#8ca6c0,-1px_-1px_0_#496684]">
                    <svg class="absolute top-[5px] -left-2 h-4 w-[9px] fill-[#5b80a5]"><use href="#tab"/></svg>
                    <span class="relative flex"><select aria-label="Wahrheitswert" class="h-4 w-[65px] appearance-none rounded bg-white/60 pl-[5px] text-black"><option>falsch</option></select><svg class="pointer-events-none absolute top-1.5 right-2 h-1 w-[5px] fill-[#5b80a5]"><use href="#tri"/></svg></span>
                  </div>
                  <label class="mt-1 ml-[9px] flex gap-1">mit Verzögerung <input type="checkbox" class="h-4 w-[15px] appearance-none rounded bg-white/60"></label>
                  <svg class="absolute top-full left-3.5 z-10 h-[5px] w-4 fill-[#5b80a5] stroke-[#496684]"><use href="#notch"/></svg>
                </section>
                <div class="mt-0.5 h-[11px] w-[30px] bg-[#5b80a5] shadow-[inset_0_1px_0_#8ca6c0,inset_-1px_-1px_0_#496684]"></div>
              </div>
            </div>
          </section>
          <svg class="absolute bottom-[11px] left-0 size-2 fill-[#a55b80]" viewBox="0 0 8 8"><path d="M0 0a8 8 0 0 0 8 8H0z"/></svg>
          <div class="mt-0.5 h-[11px] w-[171px] bg-[#a55b80] shadow-[inset_0_1px_0_#c08ca6,inset_-1px_-1px_0_#844966]"></div>
        </div>
      </div>
    </section>
  </div>
</main>
</body>
</html>
